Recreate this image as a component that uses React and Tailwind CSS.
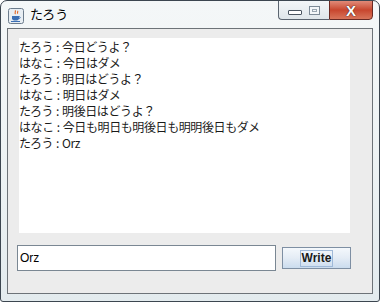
import React, { useState } from "react";

const messages = [
  ["たろう", "今日どうよ？"],
  ["はなこ", "今日はダメ"],
  ["たろう", "明日はどうよ？"],
  ["はなこ", "明日はダメ"],
  ["たろう", "明後日はどうよ？"],
  ["はなこ", "今日も明日も明後日も明明後日もダメ"],
  ["たろう", "Orz"],
];

const JavaIcon = () => (
  <svg width="16" height="16" viewBox="0 0 16 16">
    <rect x="0.5" y="0.5" width="15" height="15" rx="2" fill="#e8eef3" stroke="#6c7c8c" />
    <path d="M7 2.5c1.5 1.2-1 2 0.5 3.5M9.5 3c1 1-0.8 1.6 0.3 2.6" stroke="#e0601c" strokeWidth="1.1" fill="none" />
    <path d="M4 8h7v2.2c0 1.6-1.4 2.3-3.5 2.3S4 11.8 4 10.2z" fill="#3b6fb4" />
    <path d="M11 8.6c1.6 0 1.6 2-0.2 2" stroke="#3b6fb4" strokeWidth="1" fill="none" />
    <rect x="3" y="13" width="9" height="1" fill="#3b6fb4" />
  </svg>
);

const App = () => {
  const [text, setText] = useState("Orz");

  return (
    <div className="w-[380px] h-[302px] flex flex-col border border-[#3c4650] rounded-t-[7px] rounded-b-[3px] overflow-hidden bg-gradient-to-b from-[#f4f7f8] via-[#eef3f4] to-[#e3ebee] font-['Noto_Sans_CJK_JP',sans-serif]">
      {/* Title bar */}
      <div className="h-[27px] flex items-start shrink-0">
        <div className="ml-[7px] mt-[7px]">
          <JavaIcon />
        </div>
        <span className="ml-[6px] mt-[5px] text-[13px] leading-[16px] text-black">たろう</span>
        <div className="ml-auto mr-[6px] -mt-px flex h-[20px]">
          <div className="w-[51px] flex items-center justify-around border border-[#5b6570] border-r-0 rounded-bl-[4px] bg-gradient-to-b from-[#f3f6f8] to-[#dfe6ea] px-[6px]">
            <div className="w-[14px] h-[5px] mt-[4px] border border-[#4a5560] bg-white rounded-[1px]" />
            <div className="w-[11px] h-[9px] border border-[#7d8a96] bg-[#f3f6f8] flex items-center justify-center">
              <div className="w-[5px] h-[3px] border border-[#9aa6b0]" />
            </div>
          </div>
          <div className="w-[44px] flex items-center justify-center border border-[#6a2a24] rounded-br-[4px] bg-gradient-to-b from-[#e08a78] via-[#c8462e] to-[#d8745a]">
            <span className="text-white font-bold text-[15px] leading-none font-['Liberation_Sans',sans-serif] [text-shadow:0_0_1px_#3a1a14,0_0_1px_#3a1a14]">X</span>
          </div>
        </div>
      </div>

      {/* Client area */}
      <div className="flex-1 mx-[6px] mb-[7px] border border-[#6d7378] bg-[#ececec] flex flex-col">
        <div className="ml-[11px] mt-[9px] w-[331px] h-[195px] bg-white text-[12px] leading-[16px] text-[#1a1a1a] pt-[1px]">
          {messages.map(([who, msg], i) => (
            <div key={i} className="whitespace-nowrap tracking-[-0.4px]">
              {who}
              <span className="mx-[3px]">:</span>
              {msg}
            </div>
          ))}
        </div>

        <div className="mt-[12px] ml-[9px] flex items-center">
          <input
            type="text"
            value={text}
            onChange={(e) => setText(e.target.value)}
            className="w-[259px] h-[26px] border border-[#7a8793] bg-white px-[2px] text-[12px] text-black outline-none font-['Liberation_Sans',sans-serif]"
          />
          <button className="ml-[6px] w-[69px] h-[22px] border border-[#7e8fa3] bg-gradient-to-b from-[#f4f8fc] via-[#e4ecf5] to-[#cbdcee] flex items-center justify-center">
            <span className="border border-[#9fb9d8] px-[1px] text-[12px] leading-[15px] font-bold text-[#1a1a1a] font-['Liberation_Sans',sans-serif]">
              Write
            </span>
          </button>
        </div>
      </div>
    </div>
  );
};

export default App;
